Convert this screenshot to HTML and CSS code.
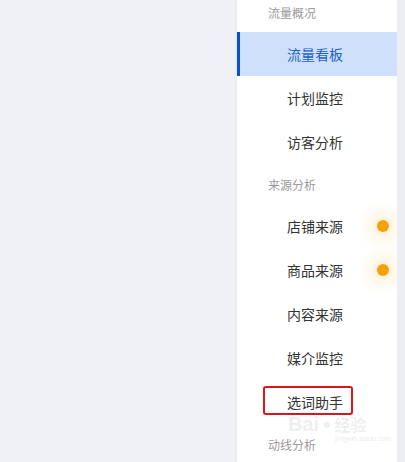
FILE: index.html
```html
<!DOCTYPE html>
<html lang="zh">
<head>
<meta charset="utf-8">
<link rel="stylesheet" href="styles.css">
</head>
<body>
<div class="page">
  <div class="main"></div>
  <nav class="side">
    <ul class="menu">
      <li class="group">流量概况</li>
      <li class="item active">流量看板</li>
      <li class="item">计划监控</li>
      <li class="item">访客分析</li>
      <li class="group">来源分析</li>
      <li class="item">店铺来源<span class="dot"></span></li>
      <li class="item">商品来源<span class="dot"></span></li>
      <li class="item">内容来源</li>
      <li class="item">媒介监控</li>
      <li class="item marked">选词助手<span class="mark"></span><span class="wm"><span class="wm-bai">Bai</span><span class="wm-paw">●</span><span class="wm-cn">经验</span></span><span class="wm-url">jingyan.baidu.com</span></li>
      <li class="group">动线分析</li>
    </ul>
  </nav>
  <div class="gutter"></div>
</div>
</body>
</html>
```

FILE: styles.css
```css
html, body {
  margin: 0;
  padding: 0;
  height: 100%;
  overflow: hidden;
}
body {
  font-family: "Noto Sans CJK SC", "Noto Sans", sans-serif;
  background: #eff0f5;
}
.page {
  display: flex;
  height: 462px;
}
.main {
  flex: 1;
  background: #eff0f5;
}
.side {
  width: 160px;
  background: #fff;
  box-shadow: -1px 0 2px rgba(0,0,0,0.04);
  overflow: hidden;
}
.gutter {
  width: 8px;
  background: #eceef3;
}
.menu {
  list-style: none;
  margin: -8px 0 0 0;
  padding: 0;
}
.group {
  height: 40px;
  display: flex;
  align-items: center;
  padding-left: 31px;
  font-size: 12px;
  color: #9a9a9a;
}
.item {
  position: relative;
  height: 44px;
  display: flex;
  align-items: center;
  padding-left: 50px;
  font-size: 14px;
  color: #333;
}
.item.active {
  background: #cfe1fa;
  color: #1f5fcf;
  box-shadow: inset 3px 0 0 #0a4fcb;
}
.dot {
  position: absolute;
  left: 140px;
  top: 16px;
  width: 12px;
  height: 12px;
  border-radius: 50%;
  background: #f4a20c;
  box-shadow: 0 0 0 4px rgba(255, 236, 200, 0.35), 0 0 10px 12px rgba(253, 240, 210, 0.45);
}
.mark {
  position: absolute;
  left: 26px;
  top: 6px;
  width: 86px;
  height: 25px;
  border: 2.5px solid #d9161c;
  border-radius: 3px;
}
.wm {
  position: absolute;
  left: 51px;
  top: 33px;
  height: 21px;
  display: flex;
  align-items: center;
  gap: 3px;
  font-family: "Liberation Sans", sans-serif;
  font-weight: bold;
  color: rgba(170, 170, 170, 0.2);
  white-space: nowrap;
  line-height: 1;
}
.wm-bai {
  font-size: 20px;
}
.wm-paw {
  font-size: 15px;
}
.wm-cn {
  font-family: "Noto Sans CJK SC", sans-serif;
  font-size: 16px;
}
.wm-url {
  position: absolute;
  left: 98px;
  top: 55px;
  font-family: "Liberation Sans", sans-serif;
  font-size: 7px;
  color: rgba(170, 170, 170, 0.25);
  white-space: nowrap;
  line-height: 1;
}
```
